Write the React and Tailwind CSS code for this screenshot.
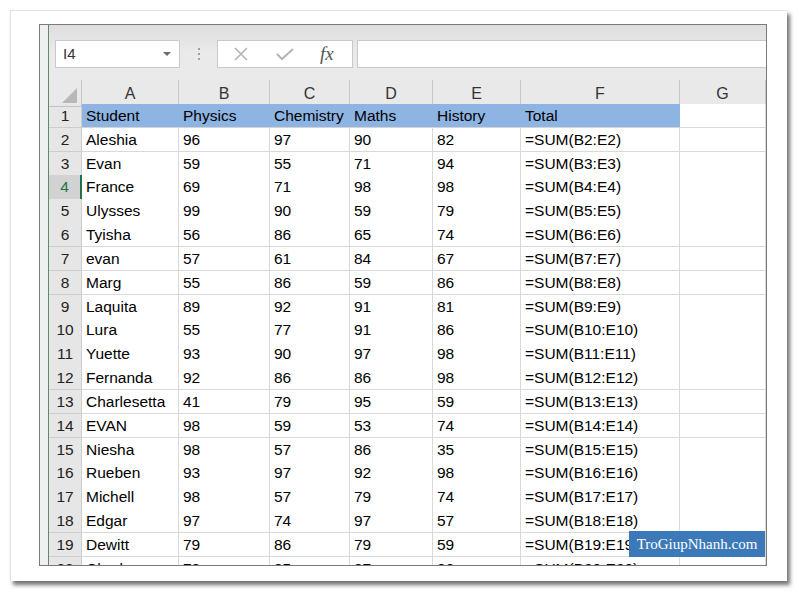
import React from "react";

const data = [
  ["Aleshia", 96, 97, 90, 82],
  ["Evan", 59, 55, 71, 94],
  ["France", 69, 71, 98, 98],
  ["Ulysses", 99, 90, 59, 79],
  ["Tyisha", 56, 86, 65, 74],
  ["evan", 57, 61, 84, 67],
  ["Marg", 55, 86, 59, 86],
  ["Laquita", 89, 92, 91, 81],
  ["Lura", 55, 77, 91, 86],
  ["Yuette", 93, 90, 97, 98],
  ["Fernanda", 92, 86, 86, 98],
  ["Charlesetta", 41, 79, 95, 59],
  ["EVAN", 98, 59, 53, 74],
  ["Niesha", 98, 57, 86, 35],
  ["Rueben", 93, 97, 92, 98],
  ["Michell", 98, 57, 79, 74],
  ["Edgar", 97, 74, 97, 57],
  ["Dewitt", 79, 86, 79, 59],
  ["Charles", 78, 85, 87, 86],
];

const gridCols =
  "grid grid-cols-[33px_97px_91px_80px_83px_88px_159px_86px]";

function RowHeader({ n, selected }) {
  return (
    <div
      className={
        selected
          ? "flex h-full items-center justify-center border-b border-r-2 border-b-[#c8c8c8] border-r-[#217346] bg-[#d2d2d2] text-[#217346]"
          : "flex h-full items-center justify-center border-b border-r border-[#cdcdcd] bg-[#e6e6e6] text-[#222]"
      }
    >
      {n}
    </div>
  );
}

function Cell({ children, blue }) {
  return (
    <div
      className={
        blue
          ? "flex h-full items-center overflow-hidden whitespace-nowrap border-b border-[#d4d4d4] bg-[#8db4e2] pl-[4px] text-black"
          : "flex h-full items-center overflow-hidden whitespace-nowrap border-b border-r border-[#d9d9d9] bg-white pl-[4px] text-black"
      }
    >
      {children}
    </div>
  );
}

export default function App() {
  const headers = ["Student", "Physics", "Chemistry", "Maths", "History", "Total"];
  return (
    <div
      className="h-[593px] w-[799px] overflow-hidden bg-white pl-[10px] pt-[10px]"
      style={{ fontFamily: '"Liberation Sans", Arial, sans-serif' }}
    >
      <div className="h-[571px] w-[777px] border-l border-t border-[#e2e2e2] bg-white pl-[28px] pt-[13px] shadow-[3px_4px_4px_rgba(0,0,0,0.55)]">
        <div className="relative flex h-[542px] w-[728px] border border-[#7a7a7a]">
          {/* left strip */}
          <div className="h-full w-[9px] border-r border-[#5e8a68] bg-[#eef2ef]" />
          {/* content */}
          <div className="h-full w-[717px] overflow-hidden bg-white">
            {/* toolbar */}
            <div className="h-[55px] bg-gradient-to-b from-[#dedede] via-[#eaeaea] to-[#eaeaea] pt-[15px]">
              <div className="flex h-[28px] items-stretch">
                <div className="ml-[6px] flex w-[125px] items-center justify-between border border-[#c9c9c9] bg-white pl-[7px] pr-[8px] text-[15px] text-[#333]">
                  <span>I4</span>
                  <svg width="8" height="5" viewBox="0 0 8 5">
                    <path d="M0 0 L8 0 L4 4 Z" fill="#6a6a6a" />
                  </svg>
                </div>
                <div className="flex w-[37px] flex-col items-center justify-center gap-[3px]">
                  <span className="h-[2px] w-[2px] bg-[#a0a0a0]" />
                  <span className="h-[2px] w-[2px] bg-[#a0a0a0]" />
                  <span className="h-[2px] w-[2px] bg-[#a0a0a0]" />
                </div>
                <div className="flex w-[136px] items-center border border-[#c9c9c9] bg-white">
                  <svg className="ml-[15px]" width="16" height="16" viewBox="0 0 16 16">
                    <path d="M2 2 L14 14 M14 2 L2 14" stroke="#b4b4b4" strokeWidth="1.6" />
                  </svg>
                  <svg className="ml-[27px]" width="18" height="14" viewBox="0 0 18 14">
                    <path d="M1 7 L6 12 L17 2" stroke="#b4b4b4" strokeWidth="2" fill="none" />
                  </svg>
                  <span
                    className="ml-[26px] text-[19px] italic text-[#555]"
                    style={{ fontFamily: '"Liberation Serif", "Times New Roman", serif' }}
                  >
                    fx
                  </span>
                </div>
                <div className="ml-[4px] flex-1 border-y border-l border-[#c9c9c9] bg-white" />
              </div>
            </div>
            {/* column headers */}
            <div className={`${gridCols} h-[24px] bg-[#e9e9e9] text-[16px] text-[#333]`}>
              <div className="relative h-full border-b border-r border-[#c4c4c4]">
                <svg className="absolute bottom-[3px] right-[4px]" width="15" height="15" viewBox="0 0 15 15">
                  <path d="M15 0 L15 15 L0 15 Z" fill="#b8b8b8" />
                </svg>
              </div>
              {["A", "B", "C", "D", "E", "F", "G"].map((l) => (
                <div
                  key={l}
                  className="flex h-full items-center justify-center border-b border-r border-[#c8c8c8] pt-[2px]"
                >
                  {l}
                </div>
              ))}
            </div>
            {/* rows */}
            <div className="text-[15.5px]">
              <div className={`${gridCols} h-[23.83px]`}>
                <RowHeader n={1} />
                {headers.map((h) => (
                  <Cell key={h} blue>
                    {h}
                  </Cell>
                ))}
                <Cell />
              </div>
              {data.map((r, i) => {
                const n = i + 2;
                return (
                  <div key={n} className={`${gridCols} h-[23.83px]`}>
                    <RowHeader n={n} selected={n === 4} />
                    <Cell>{r[0]}</Cell>
                    <Cell>{r[1]}</Cell>
                    <Cell>{r[2]}</Cell>
                    <Cell>{r[3]}</Cell>
                    <Cell>{r[4]}</Cell>
                    <Cell>{`=SUM(B${n}:E${n})`}</Cell>
                    <Cell />
                  </div>
                );
              })}
            </div>
          </div>
          {/* watermark */}
          <div
            className="absolute left-[589px] top-[506px] flex h-[26px] w-[136px] items-center justify-center bg-[#3b79b8] text-[15px] text-white"
            style={{ fontFamily: '"Liberation Serif", "Times New Roman", serif' }}
          >
            TroGiupNhanh.com
          </div>
        </div>
      </div>
    </div>
  );
}
